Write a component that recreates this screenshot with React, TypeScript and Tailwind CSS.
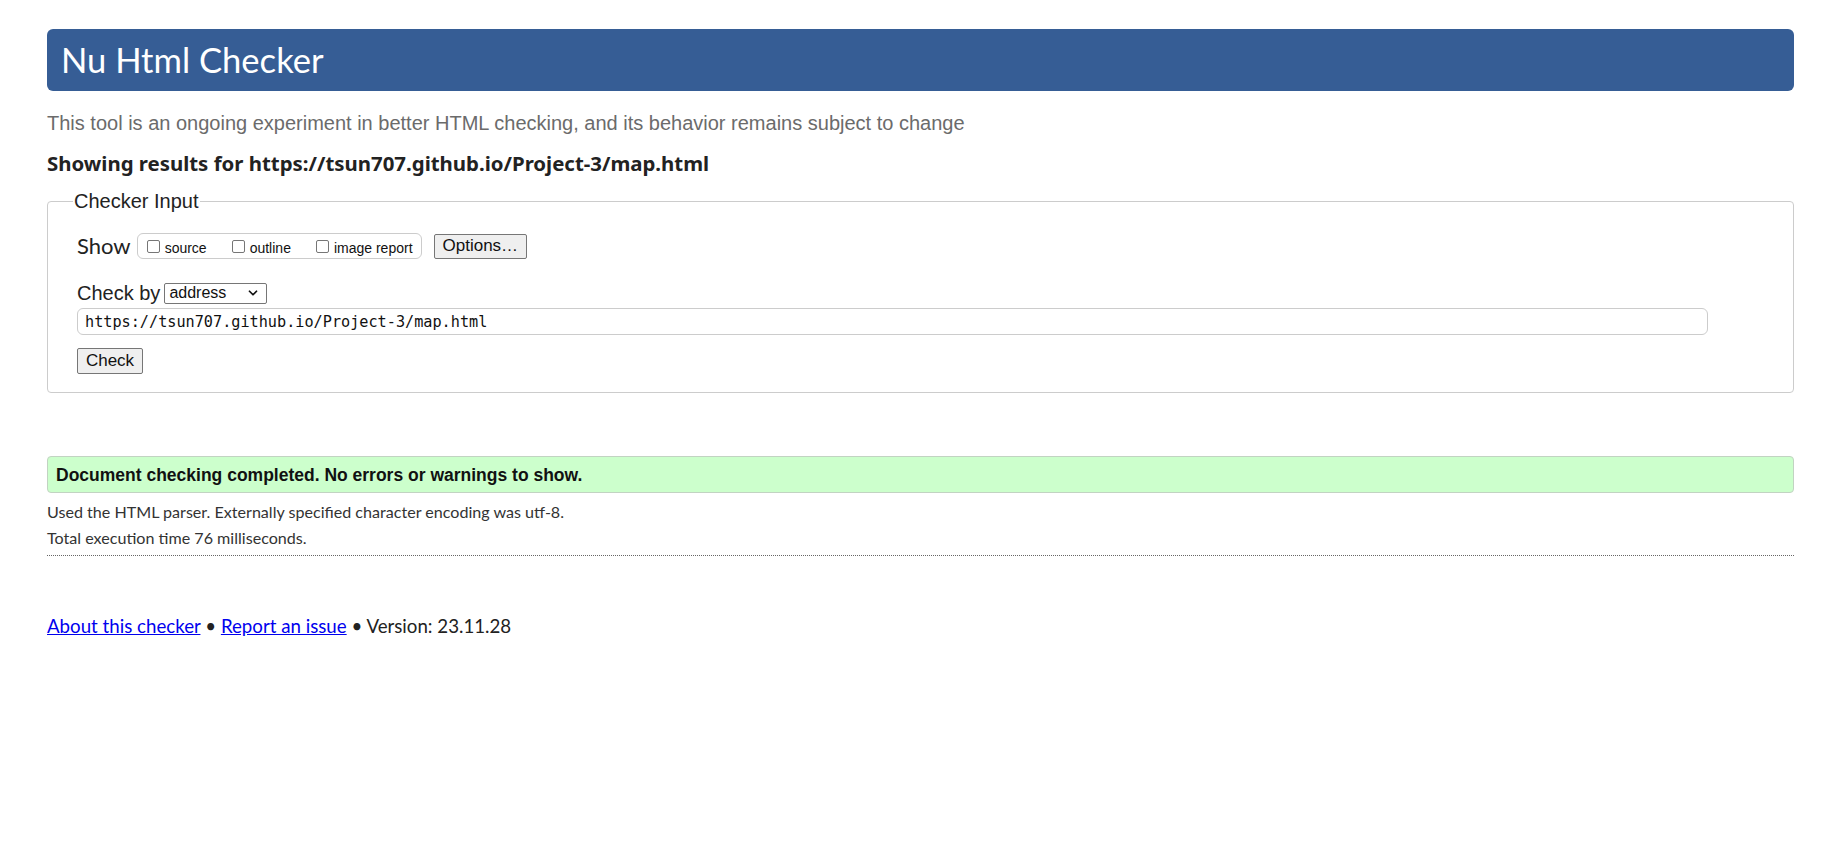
import { ChevronDown } from "lucide-react";

const segoe = "font-['Lato','Noto_Sans',sans-serif]";
const arial = "font-['Liberation_Sans',Arial,sans-serif]";

function Box({ label }: { label: string }) {
  return (
    <label className="flex items-center gap-[5px]">
      <span className="inline-block w-[13px] h-[13px] rounded-[2px] border border-[#767676] bg-white" />
      <span className="text-[14px] leading-[16px] text-[#111] mt-[4px]">{label}</span>
    </label>
  );
}

export default function App() {
  return (
    <div className="min-h-[845px] bg-white px-[47px] pt-[29px] text-[#222]">
      <div className="h-[62px] rounded-[6px] bg-[#365d95] flex items-center pl-[14px]">
        <h1 className={`${segoe} text-white text-[34.6px] leading-none`}>Nu Html Checker</h1>
      </div>

      <p className={`${arial} mt-[20px] text-[20px] leading-[24px] text-[#6b6b6b]`}>
        This tool is an ongoing experiment in better HTML checking, and its behavior remains subject to change
      </p>

      <h2 className={`font-['Noto_Sans',sans-serif] mt-[15px] text-[20.4px] leading-[26px] font-bold text-[#222]`}>
        Showing results for https://tsun707.github.io/Project-3/map.html
      </h2>

      <fieldset className="mt-[13px] border border-[#cccccc] rounded-[4px] pl-[25px] pb-[18px]">
        <legend className={`${arial} px-[1px] text-[20px] leading-[24px] text-[#222]`}>Checker Input</legend>
        <div className="pl-[4px]">
          <div className="flex items-center h-[30px] mt-[18px]">
            <span className={`${segoe} text-[22px] leading-[26px] text-[#222] mr-[6px]`}>Show</span>
            <div className={`${arial} flex items-center gap-[25px] h-[26px] border border-[#cccccc] rounded-[6px] pl-[9px] pr-[8px]`}>
              <Box label="source" />
              <Box label="outline" />
              <Box label="image report" />
            </div>
            <button
              className={`${arial} ml-[12px] h-[25px] px-[8px] border border-[#767676] rounded-[2px] bg-[#efefef] text-[17px] leading-[18px] text-[#111]`}
            >
              Options…
            </button>
          </div>

          <div className="flex items-center mt-[20px] h-[24px]">
            <span className={`${arial} text-[20px] leading-[24px] text-[#222] mr-[4px]`}>Check by</span>
            <div className={`${arial} flex items-center justify-between w-[103px] h-[21px] border border-[#767676] rounded-[2px] pl-[4px] pr-[6px] text-[16px] text-[#111]`}>
              <span className="leading-[18px]">address</span>
              <ChevronDown size={14} strokeWidth={3} className="text-[#111]" />
            </div>
          </div>

          <div className="mt-[3px] w-[1631px] h-[27px] border border-[#cccccc] rounded-[6px] flex items-center pl-[7px]">
            <span className="font-['DejaVu_Sans_Mono',monospace] text-[15.2px] leading-[18px] text-[#111]">
              https://tsun707.github.io/Project-3/map.html
            </span>
          </div>

          <button
            className={`${arial} mt-[13px] w-[66px] h-[26px] border border-[#767676] rounded-[2px] bg-[#efefef] text-[17px] leading-[20px] text-[#111]`}
          >
            Check
          </button>
        </div>
      </fieldset>

      <div className="mt-[63px] h-[37px] border border-[#c2d3c2] rounded-[4px] bg-[#ccffcc] flex items-center pl-[8px]">
        <p className={`${arial} font-bold text-[17.5px] leading-[20px] text-[#111]`}>
          Document checking completed. No errors or warnings to show.
        </p>
      </div>

      <div className={`${segoe} mt-[6px] pb-[4px] border-b border-dotted border-[#666] text-[16.1px] leading-[26px] text-[#333]`}>
        <p>Used the HTML parser. Externally specified character encoding was utf-8.</p>
        <p>Total execution time 76 milliseconds.</p>
      </div>

      <p className={`${segoe} mt-[57px] text-[18.7px] leading-[26px] text-[#222]`}>
        <a href="#" className="text-[#0000ee] underline">About this checker</a>
        {" • "}
        <a href="#" className="text-[#0000ee] underline">Report an issue</a>
        {" • Version: 23.11.28"}
      </p>
    </div>
  );
}
